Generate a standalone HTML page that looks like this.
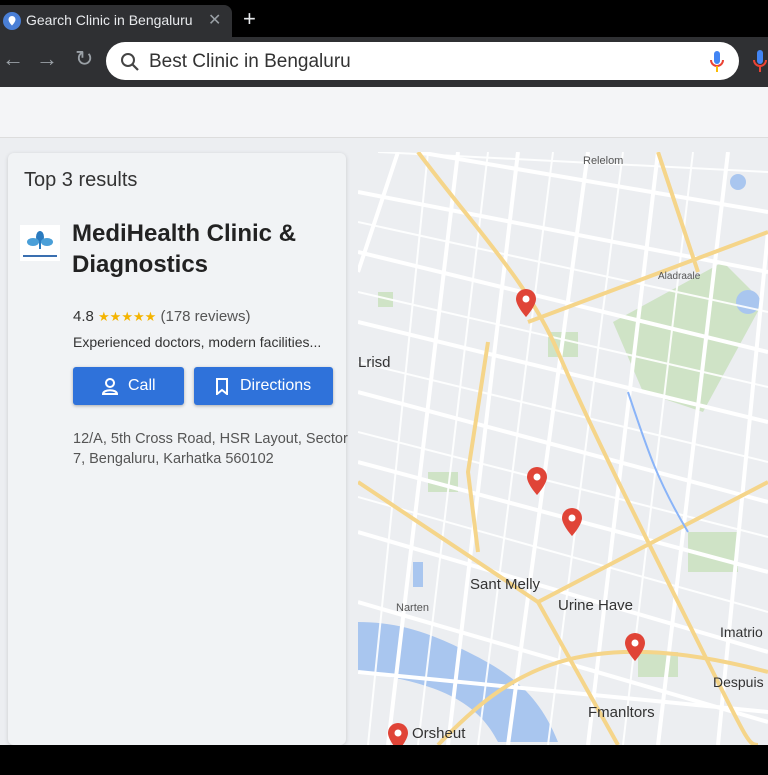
<!DOCTYPE html>
<html><head><meta charset="utf-8"><style>
*{margin:0;padding:0;box-sizing:border-box}
body{width:768px;height:775px;overflow:hidden;background:#000;font-family:"Liberation Sans",sans-serif;position:relative}
.tabbar{position:absolute;left:0;top:0;width:768px;height:37px;background:#000}
.tab{position:absolute;left:0;top:5px;width:232px;height:32px;background:#2f3033;border-radius:0 8px 0 0}
.tab .t{position:absolute;left:26px;top:7px;color:#e8eaed;font-size:14px}
.tab .x{position:absolute;left:208px;top:5px;color:#9aa0a6;font-size:16px}
.plus{position:absolute;left:243px;top:6px;color:#e8eaed;font-size:22px}
.toolbar{position:absolute;left:0;top:37px;width:768px;height:50px;background:#2f3033}
.omni{position:absolute;left:106px;top:5px;width:633px;height:38px;background:#fff;border-radius:19px}
.omni .t{position:absolute;left:43px;top:9px;font-size:19px;color:#333}
.nav{position:absolute;top:11px;color:#9aa0a6;font-size:22px}
.band{position:absolute;left:0;top:87px;width:768px;height:51px;background:#f4f5f7;border-bottom:1px solid #ddd}
.main{position:absolute;left:0;top:138px;width:768px;height:607px;background:#eceef1}
.card{position:absolute;left:8px;top:15px;width:338px;height:592px;background:#f1f3f5;border-radius:6px;box-shadow:0 1px 4px rgba(0,0,0,.15)}
.bottom{position:absolute;left:0;top:745px;width:768px;height:30px;background:#000}
.btn{position:absolute;top:229px;height:38px;background:#2f72da;border-radius:3px;color:#fff;font-size:16px;box-shadow:0 1px 3px rgba(0,0,0,.3)}
</style></head><body>
<div class="tabbar">
 <div class="tab">
  <svg style="position:absolute;left:3px;top:7px" width="18" height="18"><circle cx="9" cy="9" r="9" fill="#4a7fd6"/><path d="M9 4a3.5 3.5 0 0 1 3.5 3.5c0 2.5-3.5 6-3.5 6s-3.5-3.5-3.5-6A3.5 3.5 0 0 1 9 4z" fill="#fff"/></svg>
  <span class="t">Gearch Clinic in Bengaluru</span><span class="x">✕</span></div>
 <span class="plus">+</span>
</div>
<div class="toolbar">
 <span class="nav" style="left:2px;top:9px">←</span><span class="nav" style="left:36px;top:9px">→</span><span class="nav" style="left:75px;top:9px">↻</span>
 <div class="omni">
  <svg style="position:absolute;left:14px;top:10px" width="20" height="20"><circle cx="8" cy="8" r="6" fill="none" stroke="#444" stroke-width="2"/><path d="M12.5 12.5L18 18" stroke="#444" stroke-width="2.2"/></svg>
  <span class="t">Best Clinic in Bengaluru</span>
  <svg style="position:absolute;left:603px;top:8px" width="16" height="24"><rect x="5" y="1" width="6" height="13" rx="3" fill="#4285f4"/><path d="M2 10a6 6 0 0 0 12 0" stroke="#ea4335" stroke-width="2" fill="none"/><path d="M8 16v6" stroke="#fbbc05" stroke-width="2"/></svg>
 </div>
 <svg style="position:absolute;left:752px;top:12px" width="16" height="26"><rect x="5" y="1" width="6" height="14" rx="3" fill="#4285f4"/><path d="M2 11a6 6 0 0 0 12 0" stroke="#ea4335" stroke-width="2" fill="none"/><path d="M8 17v6" stroke="#ea4335" stroke-width="2"/></svg>
</div>
<div class="band"></div>
<div class="main">
 <div class="card">
  <div style="position:absolute;left:16px;top:16px;font-size:20px;color:#333">Top 3 results</div>
  <div style="position:absolute;left:12px;top:72px;width:40px;height:36px;background:#fff">
   <svg width="40" height="36"><ellipse cx="20" cy="12" rx="4" ry="6" fill="#2b7bbf"/><ellipse cx="13" cy="17" rx="6" ry="4" fill="#4a9fd8"/><ellipse cx="27" cy="17" rx="6" ry="4" fill="#4a9fd8"/><path d="M20 16v8" stroke="#2b7bbf" stroke-width="2"/><rect x="3" y="30" width="34" height="2" fill="#3a6fb0"/></svg>
  </div>
  <div style="position:absolute;left:64px;top:65px;font-size:24px;font-weight:bold;color:#222;line-height:31px">MediHealth Clinic &amp;<br>Diagnostics</div>
  <div style="position:absolute;left:65px;top:155px;font-size:15px;color:#333">4.8 <span style="color:#f4b400;font-size:13px">★★★★★</span> <span style="color:#555">(178 reviews)</span></div>
  <div style="position:absolute;left:65px;top:181px;font-size:14px;color:#333">Experienced doctors, modern facilities...</div>
  <div style="position:absolute;left:65px;top:276px;font-size:14.5px;color:#555;line-height:20px;width:280px">12/A, 5th Cross Road, HSR Layout, Sector 7, Bengaluru, Karhatka 560102</div>
 </div>
 <div class="btn" style="left:73px;width:111px"><svg style="position:absolute;left:28px;top:10px" width="18" height="18"><circle cx="9" cy="6" r="4" fill="none" stroke="#fff" stroke-width="2"/><path d="M2 17c0-5 14-5 14 0z" fill="none" stroke="#fff" stroke-width="2"/></svg><span style="position:absolute;left:55px;top:10px">Call</span></div>
 <div class="btn" style="left:194px;width:139px"><svg style="position:absolute;left:20px;top:10px" width="16" height="18"><path d="M3 2h10v15l-5-4-5 4z" fill="none" stroke="#fff" stroke-width="2"/></svg><span style="position:absolute;left:46px;top:10px">Directions</span></div>
 <svg style="position:absolute;left:358px;top:14px" width="410" height="593" viewBox="0 0 410 593">
  <rect width="410" height="593" fill="#eceef1"/>
  <g fill="#cfe3c6"><path d="M255 170l110-60 40 40-60 110-60-20z"/><rect x="70" y="320" width="30" height="20"/><rect x="330" y="380" width="50" height="40"/><rect x="190" y="180" width="30" height="25"/><rect x="20" y="140" width="15" height="15"/><rect x="280" y="500" width="40" height="25"/></g>
  <g fill="#a9c6ef"><path d="M0 470c40 0 70 10 110 30s70 40 90 90h-60c-20-40-60-60-140-70z"/><circle cx="390" cy="150" r="12"/><circle cx="380" cy="30" r="8"/><rect x="55" y="410" width="10" height="25"/></g>
  <g stroke="#fff" stroke-width="4" fill="none">
   <path d="M0 40L410 120M0 100L410 200M0 170L410 270M0 240L410 350M0 310L410 420M0 380L410 500M0 450L410 570M40 0L0 120M100 0L30 593M160 0L90 593M230 0L150 593M300 0L230 593M370 0L300 593M410 80L360 593M0 520L410 560M60 0L410 60"/>
  </g>
  <g stroke="#fff" stroke-width="2" fill="none" opacity=".9">
   <path d="M0 70L410 160M0 140L410 235M0 210L410 310M0 280L410 385M0 345L410 460M70 0L10 593M130 0L60 593M195 0L120 593M265 0L190 593M335 0L265 593M20 0L410 20"/>
  </g>
  <g stroke="#f5d58a" stroke-width="4" fill="none">
   <path d="M60 0C120 80 170 130 200 200S270 350 330 470 390 593 400 593"/>
   <path d="M170 170L410 80"/>
   <path d="M0 330L180 450 410 330"/>
   <path d="M300 0L340 120"/>
   <path d="M180 450L260 593"/>
   <path d="M80 593C150 520 220 470 410 520"/>
   <path d="M130 190L110 320 120 400"/>
  </g>
  <path d="M270 240C290 300 300 330 330 380" stroke="#8ab4f8" stroke-width="2" fill="none"/>
  <g font-family="Liberation Sans,sans-serif" fill="#333">
   <text x="0" y="215" font-size="15">Lrisd</text>
   <text x="112" y="437" font-size="15">Sant Melly</text>
   <text x="200" y="458" font-size="15">Urine Have</text>
   <text x="362" y="485" font-size="14">Imatrio</text>
   <text x="355" y="535" font-size="14">Despuis</text>
   <text x="230" y="565" font-size="15">Fmanltors</text>
   <text x="54" y="586" font-size="15">Orsheut</text>
   <text x="38" y="459" font-size="11" fill="#555">Narten</text>
   <text x="225" y="12" font-size="11" fill="#555">Relelom</text>
   <text x="300" y="127" font-size="10" fill="#555">Aladraale</text>
  </g>
  <g fill="#e04437">
   <path d="M168 137a10 10 0 0 1 10 10c0 7-10 18-10 18s-10-11-10-18a10 10 0 0 1 10-10z"/>
   <path d="M179 315a10 10 0 0 1 10 10c0 7-10 18-10 18s-10-11-10-18a10 10 0 0 1 10-10z"/>
   <path d="M214 356a10 10 0 0 1 10 10c0 7-10 18-10 18s-10-11-10-18a10 10 0 0 1 10-10z"/>
   <path d="M277 481a10 10 0 0 1 10 10c0 7-10 18-10 18s-10-11-10-18a10 10 0 0 1 10-10z"/>
   <path d="M40 571a10 10 0 0 1 10 10c0 7-10 18-10 18s-10-11-10-18a10 10 0 0 1 10-10z"/>
  </g>
  <g fill="#fff"><circle cx="168" cy="147" r="3.5"/><circle cx="179" cy="325" r="3.5"/><circle cx="214" cy="366" r="3.5"/><circle cx="277" cy="491" r="3.5"/><circle cx="40" cy="581" r="3.5"/></g>
 </svg>
</div>
<div class="bottom"></div>
</body></html>
